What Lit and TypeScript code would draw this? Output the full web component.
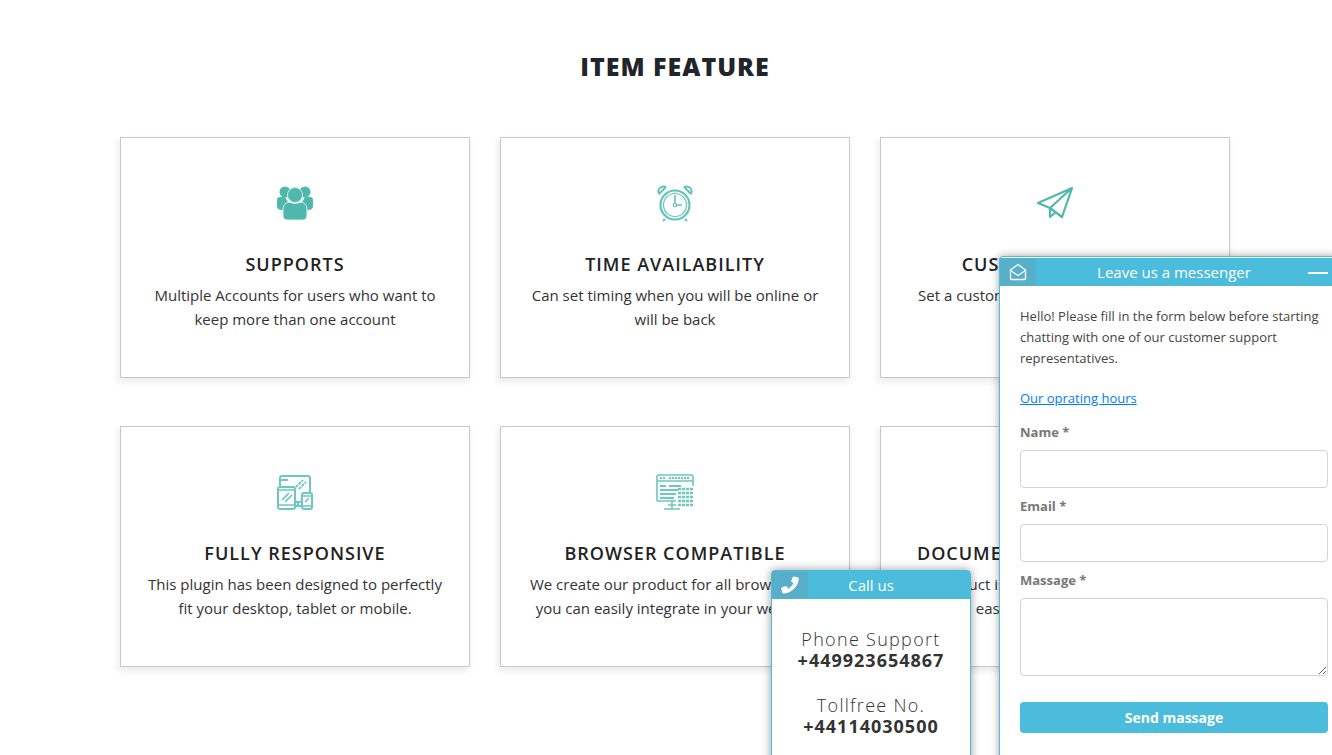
import { LitElement, html, css, svg } from "lit";
import { customElement } from "lit/decorators.js";

const T = "#4fb8ac";
const icons: Record<string, any> = {
  people: svg`<svg width="36" height="36" viewBox="0 0 36 36">
    <g fill="${T}">
      <circle cx="8" cy="7" r="5.500"/><circle cx="28" cy="7" r="5.500"/>
      <path d="M0 15q0-3 3-3h5q2 4 4 6v7H5q-5 0-5-4z"/><path d="M36 15q0-3-3-3h-5q-2 4-4 6v7h7q5 0 5-4z"/>
    </g>
    <g fill="${T}" stroke="#d4efeb" stroke-width="1">
      <circle cx="18" cy="10" r="7.500"/>
      <path d="M6 25q0-7 6-8 6 3 12 0 6 1 6 8v5q0 5-5 5H11q-5 0-5-5z"/>
    </g></svg>`,
  clock: svg`<svg width="36" height="38" viewBox="0 0 36 38" fill="none" stroke="#62c4b9">
    <circle cx="18" cy="21" r="14.500" stroke-width="2.200"/><circle cx="18" cy="21" r="11.500" stroke-width="1.200"/>
    <path d="M18 11v9M19 21h6" stroke-width="1.600"/><circle cx="18" cy="21" r="1.700" stroke-width="1.300"/>
    <path d="M2 10C0 5 4 1 9 3M34 10c2-5-2-9-7-7M2 10l7-7M34 10l-7-7M8 35l-2 2M28 35l2 2" stroke-width="2"/></svg>`,
  plane: svg`<svg width="36" height="32" viewBox="0 0 36 32" fill="none" stroke="${T}" stroke-width="2.200" stroke-linejoin="round">
    <path d="M35 1 1 16l12 5 12 9zM35 1 13 21v9l6-5"/></svg>`,
  devices: svg`<svg width="38" height="36" viewBox="0 0 38 36" fill="none" stroke="#6cc8bc" stroke-width="2">
    <path d="M4 12V4q0-2 2-2h26q2 0 2 2v14M4 6h8M19 28h7M22 28v4M19 32h7"/>
    <path d="M20 13l7-7M23 15l7-7" stroke-dasharray="3 1"/>
    <rect x="2" y="13" width="17" height="22" rx="2" fill="#fff"/><path d="M2 16h17M2 31h17M6 26l7-7M9 28l7-7" stroke-width="1.700"/>
    <rect x="26" y="19" width="10" height="16" rx="2" fill="#fff"/><path d="M26 22h10M26 32h10M29 28l4-4" stroke-width="1.600"/></svg>`,
  browser: svg`<svg width="38" height="37" viewBox="0 0 38 37" fill="none" stroke="#6cc8bc" stroke-width="1.600">
    <path d="M1 27V3q0-2 2-2h32q2 0 2 2v9M1 7h36M1 27h19M12 31h8M8 35h16M16 27v8"/>
    <path d="M4 4h6M13 4h20" stroke-width="1.800" stroke-dasharray="2 1"/>
    <path d="M4 12h6M13 12h12M4 16h18M4 20h16M4 24h14" stroke-width="1.800"/>
    <path d="M22 15h15M22 19h15M22 23h15M22 27h15M22 31h15" stroke-width="2.600" stroke-dasharray="3 1"/></svg>`,
};

const cards = [
  ["people", "SUPPORTS", "Multiple Accounts for users who want to keep more than one account"],
  ["clock", "TIME AVAILABILITY", "Can set timing when you will be online or will be back"],
  ["plane", "CUSTOM MESSAGES", "Set a custom welcome message for our users on arrival"],
  ["devices", "FULLY RESPONSIVE", "This plugin has been designed to perfectly fit your desktop, tablet or mobile."],
  ["browser", "BROWSER COMPATIBLE", "We create our product for all browsers so you can easily integrate in your website."],
  ["", "DOCUMENTATION INCLUDED", "Our product is well documented so that we easily set it up and use"],
];

@customElement("app-root")
export class AppRoot extends LitElement {
  static styles = css`
    :host { display: block; height: 755px; overflow: hidden; background: #fff; font-family: "Open Sans", sans-serif; color: #333; position: relative; }
    h1 { margin: 0; padding: 49px 0 0 120px; width: 1110px; height: 38px; text-align: center; font-size: 25px; line-height: 34px; font-weight: 800; letter-spacing: 1px; color: #212529; }
    .grid { display: grid; grid-template-columns: repeat(3, 350px); column-gap: 30px; row-gap: 48px; padding: 50px 0 0 120px; }
    .card { height: 241px; box-sizing: border-box; border: 1px solid #c8c8c8; box-shadow: -3px 4px 5px 1px rgba(0,0,0,.05), 2px 2px 8px rgba(0,0,0,.03); padding: 46px 20px 0; text-align: center; background: #fff; }
    .ic { height: 38px; display: flex; justify-content: center; align-items: center; }
    h3 { margin: 30px 0 0; font-size: 18px; line-height: 24px; font-weight: 600; letter-spacing: 1px; color: #222; white-space: nowrap; }
    p { margin: 7px 0 0; font-size: 15px; line-height: 24px; color: #333; }

    .head { height: 28px; background: #4bbcdc; color: #fff; position: relative; display: flex; align-items: center; justify-content: center; font-size: 15px; font-weight: 500; }
    .head .i { position: absolute; left: 0; top: 0; width: 36px; height: 100%; background: #57afc9; display: flex; align-items: center; justify-content: center; }
    .dash { position: absolute; right: 4px; top: 14px; width: 20px; height: 2px; background: #fff; }

    .call { position: absolute; left: 771px; top: 570px; width: 200px; height: 200px; box-sizing: border-box; border: 1px solid #4bbcdc; border-radius: 4px 4px 0 0; background: #fff; box-shadow: 0 0 10px rgba(0,0,0,.4); text-align: center; }
    .call .body { padding-top: 29px; font-size: 18px; line-height: 22px; letter-spacing: 1.300px; font-weight: 300; color: #333; }
    .call b { display: block; font-weight: 700; letter-spacing: 1px; margin: -1px 0 23px; }

    .chat { position: absolute; left: 999px; top: 256px; width: 340px; height: 520px; box-sizing: border-box; border: 1px solid #4bbcdc; border-radius: 4px 0 0 0; background: #fff; box-shadow: 0 0 8px rgba(0,0,0,.35); }
    .chat .head { width: 316px; padding-left: 16px; margin-top: 1px; }
    .form { width: 308px; padding: 20px 0 0 20px; font-size: 13px; line-height: 21px; color: #444; }
    .form a { display: block; color: #007bff; margin-top: 19px; }
    label { display: block; font-weight: 700; color: #777; font-size: 13px; line-height: 18px; margin: 14px 0 9px; }
    .box { display: block; width: 100%; height: 38px; box-sizing: border-box; border: 1px solid #ced4da; border-radius: 4px; background: #fff; padding: 0; }
    label.next { margin-top: 9px; }
    textarea.box { height: 78px; }
    button { display: block; width: 308px; height: 31px; margin-top: 26px; border: 0; border-radius: 4px; background: #4bbcdc; color: #fff; font: 700 14px "Open Sans", sans-serif; }
  `;

  render() {
    return html`
      <h1>ITEM FEATURE</h1>
      <div class="grid">
        ${cards.map(([ic, t, d]) => html`<div class="card">
          <div class="ic">${icons[ic]}</div>
          <h3>${t}</h3>
          <p>${d}</p>
        </div>`)}
      </div>

      <div class="call">
        <div class="head">
          <div class="i"><svg width="18" height="18" viewBox="0 0 18 18"><path fill="#fff" d="M17 1.500 13 .5c-.5-.1-1 .1-1.200.6l-1.500 3.500c-.2.400-.1.900.3 1.200l1.900 1.500a11.500 11.500 0 0 1-5.400 5.400L5.600 10.300c-.3-.4-.8-.5-1.200-.3L.9 11.500c-.5.200-.7.700-.6 1.200l1 4c.1.500.5.800 1 .8C10.300 17.500 17.800 10 17.800 2.500c0-.5-.3-.9-.8-1z"/></svg></div>
          <div>Call us</div>
        </div>
        <div class="body">
          Phone Support<b>+449923654867</b>
          Tollfree No.<b>+44114030500</b>
        </div>
      </div>

      <div class="chat">
        <div class="head">
          <div class="i"><svg width="18" height="18" viewBox="0 0 18 18" fill="none" stroke="#fff" stroke-width="1.300" stroke-linejoin="round"><path d="M1.500 7 9 1.500 16.500 7v8.500q0 1-1 1h-13q-1 0-1-1z"/><path d="M1.500 7.500 9 12.500l7.500-5"/></svg></div>
          <div>Leave us a messenger</div>
          <div class="dash"></div>
        </div>
        <div class="form">
          Hello! Please fill in the form below before starting chatting with one of our customer support representatives.
          <a href="#">Our oprating hours</a>
          <label>Name *</label>
          <div class="box"></div>
          <label class="next">Email *</label>
          <div class="box"></div>
          <label class="next">Massage *</label>
          <textarea class="box"></textarea>
          <button>Send massage</button>
        </div>
      </div>
    `;
  }
}
